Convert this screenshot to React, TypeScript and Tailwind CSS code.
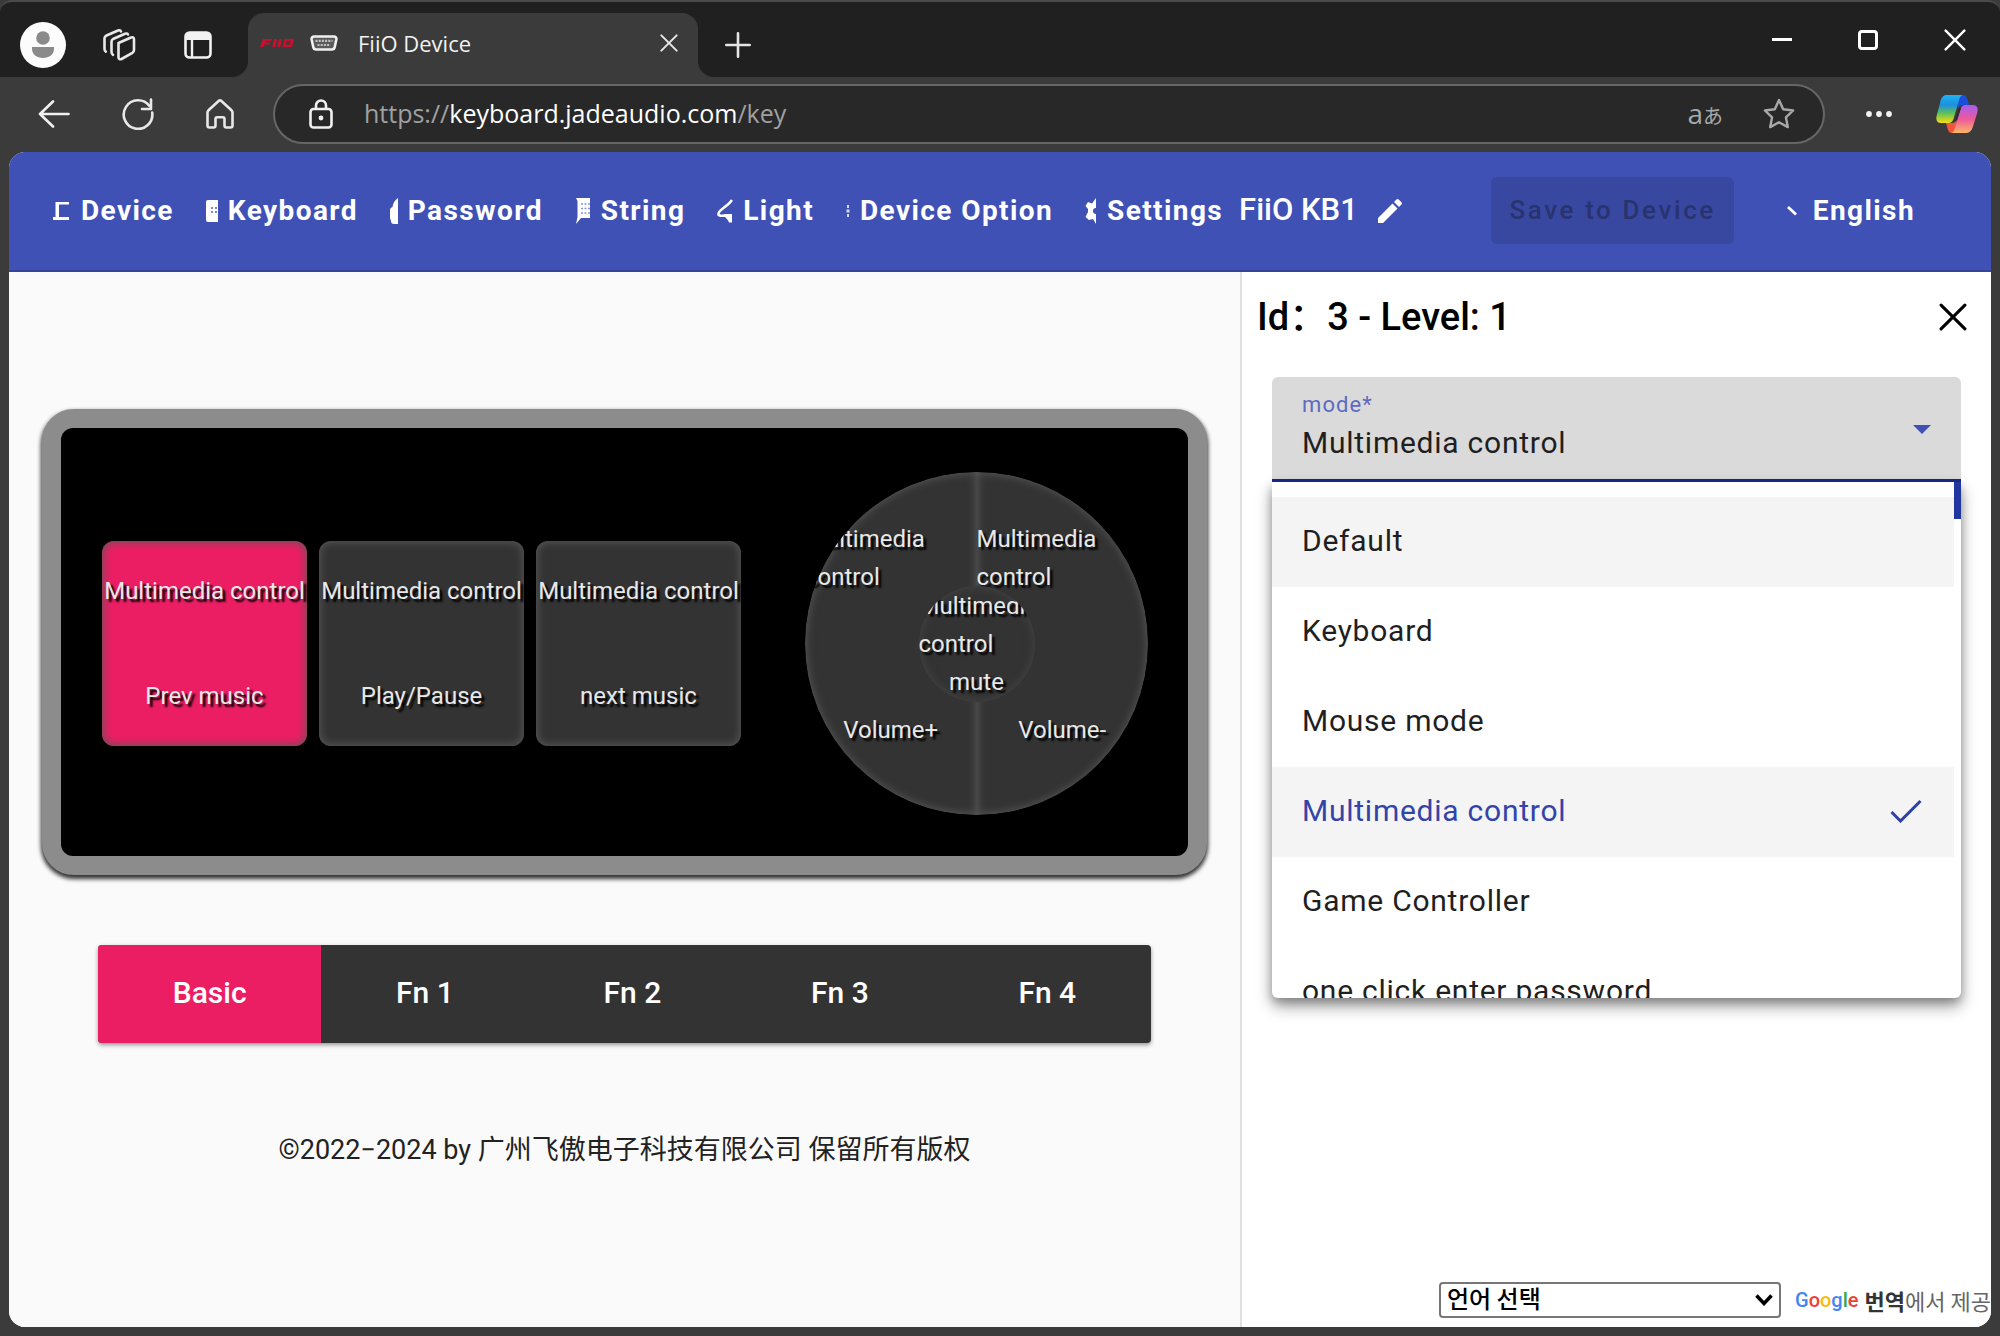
import React, { useState } from "react";

type IconProps = { className?: string };

/* ---------- browser icons ---------- */

function AvatarIcon() {
  return (
    <svg viewBox="0 0 46 46" className="size-[46px]" aria-hidden="true">
      <circle cx="23" cy="23" r="23" fill="#fcfcfc" />
      <circle cx="23" cy="16" r="6.800" fill="#8a8a8a" />
      <path d="M12 25h22v1.500c0 6-4.700 9.500-11 9.500s-11-3.500-11-9.500z" fill="#8a8a8a" />
    </svg>
  );
}

function WorkspacesIcon() {
  return (
    <svg viewBox="0 0 34 34" className="size-[34px]" fill="none" stroke="#e8e8e8" strokeWidth="2.600" strokeLinejoin="round" strokeLinecap="round" aria-hidden="true">
      <path d="M16.500 15 29 9.500c1.500-.7 3 0 3 1.800V22c0 1.200-.6 2.200-1.600 2.800L19.500 31c-1.500.7-3 0-3-1.800z" />
      <path d="M26 6.500C25.500 5.500 24 5.200 23 5.700L11 11c-1 .6-1.500 1.500-1.500 2.700V24c0 1.200.5 2.200 1.500 2.800" />
      <path d="M19 3.500C18.500 2.300 17 2 16 2.500L4.500 7.500C3.500 8 2.500 9 2.500 10.200V21c0 1.200.4 2 1.300 2.600" />
    </svg>
  );
}

function TabActionsIcon() {
  return (
    <svg viewBox="0 0 28 28" className="size-7" fill="none" aria-hidden="true">
      <rect x="1.500" y="1.500" width="25" height="25" rx="4" stroke="#f2f2f2" strokeWidth="2.600" />
      <path d="M2 2h24v7H2z" fill="#f2f2f2" />
      <path d="M8 9v17" stroke="#f2f2f2" strokeWidth="2.400" />
    </svg>
  );
}

function SerialPortIcon() {
  return (
    <svg viewBox="0 0 28 16" className="h-4 w-7" fill="none" aria-hidden="true">
      <path d="M4 1.500h20c1.500 0 2.600 1.200 2.400 2.700l-1.600 7.500c-.3 1.600-1.500 2.800-3.100 2.800H6.300c-1.600 0-2.800-1.200-3.100-2.800L1.600 4.200C1.400 2.700 2.500 1.500 4 1.500z" fill="#5a5a5a" stroke="#f0f0f0" strokeWidth="2.600" />
      <path d="M5.500 5.800h17M7.500 10h13" stroke="#c4c4c4" strokeWidth="2.200" strokeDasharray="2 1.200" />
    </svg>
  );
}

function FiioMark() {
  return (
    <svg viewBox="0 0 34 8" className="h-2 w-[34px]" fill="#c8102e" aria-hidden="true">
      <path d="M3 0h9l-.8 2.200H5.500l-.4 1.200h5l-.7 2H4.300L3.500 8H0z" />
      <path d="M14 0h3l-1.800 8h-3zM19 0h3l-1.800 8h-3z" />
      <path fillRule="evenodd" d="M24.500 0H34l-2 8h-9.500zM26.500 2.300l-.8 3.400h4l.8-3.400z" />
    </svg>
  );
}

function CrossIcon({ className = "" }: IconProps) {
  return (
    <svg viewBox="0 0 20 20" className={className} fill="none" stroke="currentColor" strokeWidth="2.200" strokeLinecap="round" aria-hidden="true">
      <path d="m1.500 1.500 17 17M18.500 1.500l-17 17" />
    </svg>
  );
}

function PlusIcon() {
  return (
    <svg viewBox="0 0 26 26" className="size-[26px]" fill="none" stroke="#e6e6e6" strokeWidth="2.600" strokeLinecap="round" aria-hidden="true">
      <path d="M13 1.300v23.400M1.300 13h23.400" />
    </svg>
  );
}

function BackIcon() {
  return (
    <svg viewBox="0 0 32 28" className="h-7 w-8" fill="none" stroke="#f0f0f0" strokeWidth="2.600" strokeLinecap="round" strokeLinejoin="round" aria-hidden="true">
      <path d="M15 1.500 2 14l13 12.500M2 14h28.500" />
    </svg>
  );
}

function ReloadIcon() {
  return (
    <svg viewBox="0 0 32 32" className="size-8" fill="none" stroke="#e8e8e8" strokeWidth="2.600" strokeLinecap="round" strokeLinejoin="round" aria-hidden="true">
      <path d="M30.200 14.500A14.300 14.300 0 1 1 27.500 8M29 1.500v9.500h-9" />
    </svg>
  );
}

function HomeIcon() {
  return (
    <svg viewBox="0 0 28 30" className="h-[30px] w-7" fill="none" stroke="#e8e8e8" strokeWidth="2.600" strokeLinejoin="round" aria-hidden="true">
      <path d="M1.500 13.500c0-.9.400-1.600 1-2.200L12.600 2a2.100 2.100 0 0 1 2.800 0l10.100 9.300c.6.6 1 1.300 1 2.200V26.500c0 1.100-.9 2-2 2h-4c-1.100 0-2-.9-2-2V20c0-1-.8-1.800-1.800-1.800h-5.400c-1 0-1.800.8-1.800 1.800v6.500c0 1.100-.9 2-2 2h-4c-1.100 0-2-.9-2-2z" />
    </svg>
  );
}

function LockIcon() {
  return (
    <svg viewBox="0 0 24 30" className="h-[30px] w-6" fill="none" stroke="#f0f0f0" strokeWidth="2.600" aria-hidden="true">
      <rect x="1.500" y="10" width="21" height="18.500" rx="3" />
      <path d="M7 10V6.500a5 5 0 0 1 10 0V10" />
      <circle cx="12" cy="19" r="2.400" fill="#f0f0f0" stroke="none" />
    </svg>
  );
}

function StarIcon() {
  return (
    <svg viewBox="0 0 32 32" className="size-8" fill="none" stroke="#a8a8a8" strokeWidth="2.400" strokeLinejoin="round" aria-hidden="true">
      <path d="m16 2 4.200 9.300 9.900 1.200-7.200 6.800 1.900 9.800L16 24.300l-8.800 4.800 1.900-9.800-7.200-6.800 9.900-1.200z" />
    </svg>
  );
}

function DotsIcon() {
  return (
    <svg viewBox="0 0 26 6" className="h-[6px] w-[26px]" fill="#f2f2f2" aria-hidden="true">
      <circle cx="3" cy="3" r="2.900" />
      <circle cx="13" cy="3" r="2.900" />
      <circle cx="23" cy="3" r="2.900" />
    </svg>
  );
}

function CopilotIcon() {
  return (
    <svg viewBox="0 0 42 40" className="h-10 w-[42px]" aria-hidden="true">
      <defs>
        <linearGradient id="cp-a" x1="0" y1="0" x2="0" y2="1">
          <stop offset="0" stopColor="#1eb4f5" />
          <stop offset=".35" stopColor="#1c8fe0" />
          <stop offset=".65" stopColor="#5fbf5a" />
          <stop offset="1" stopColor="#f7e010" />
        </linearGradient>
        <linearGradient id="cp-b" x1="0" y1="0" x2="0" y2="1">
          <stop offset="0" stopColor="#a45cf0" />
          <stop offset=".5" stopColor="#ee5a9a" />
          <stop offset="1" stopColor="#fcb46a" />
        </linearGradient>
      </defs>
      <path d="M22 1h5c2.500 0 3.600 1.500 4.300 4l1.700 6h-6c-3 0-4.500 1.500-5.300 4z" fill="#1b4fd8" />
      <path d="M20 39h-4c-2.500 0-3.600-1.500-4.300-4L10 29h6c3 0 4-1.500 5-4z" fill="#f0563c" />
      <path d="M11.500 1H27c-2 .3-3 2-3.700 4.300l-5.600 19C16.600 28 15 29 12 29H5c-4 0-5.500-3-4.300-7.500l4-15C5.700 3 7.500 1 11.500 1z" fill="url(#cp-a)" />
      <path d="M30.500 39H15c2-.3 3-2 3.700-4.300l5.600-19c1-3.700 2.700-4.700 5.700-4.700h7c4 0 5.500 3 4.300 7.500l-4 13c-1 3.500-2.800 7.500-6.800 7.500z" fill="url(#cp-b)" />
      <path d="m23 14-4 13.500 2-1.500 4-12z" fill="#2b2b2b" />
    </svg>
  );
}

function TabFlare({ className = "" }: IconProps) {
  return (
    <svg viewBox="0 0 16 16" className={className} fill="#3b3b3b" aria-hidden="true">
      <path d="M16 0v16H0A16 16 0 0 0 16 0z" />
    </svg>
  );
}

/* ---------- app bar icons, drawn as the narrow slices their slots show ---------- */

function NavIcon({ name }: { name: string }) {
  switch (name) {
    case "Device":
      return (
        <svg viewBox="0 0 18 22" className="h-[22px] w-[18px]" fill="#fff" aria-hidden="true">
          <path d="M2.500 2H16v2.500H6V17h10v3H0v-3h2.500z" />
        </svg>
      );
    case "Keyboard":
      return (
        <svg viewBox="0 0 12 22" className="h-[22px] w-3" aria-hidden="true">
          <path d="M2 0h10v22H2a2 2 0 0 1-2-2V2a2 2 0 0 1 2-2z" fill="#fff" />
          <path d="M5 7h2v2H5zm4 0h2v2H9zM5 11h2v2H5zm4 0h2v2H9z" fill="#7d88cc" />
        </svg>
      );
    case "Password":
      return (
        <svg viewBox="0 0 8 26" className="h-[26px] w-2" fill="#fff" aria-hidden="true">
          <path d="M8 0v26H4a3 3 0 0 1-3-3L0 20v-8a3 3 0 0 1 2.500-3C3 5 5 2 8 0z" />
        </svg>
      );
    case "String":
      return (
        <svg viewBox="0 0 16 26" className="h-[26px] w-4" aria-hidden="true">
          <path d="M1 0h14v20H6l-5 6 1.500-7V3z" fill="#fff" />
          <path d="M6 6h9M6 10.500h9M6 15h9" stroke="#8b95d2" strokeWidth="1.600" strokeDasharray="2 1.500" />
        </svg>
      );
    case "Light":
      return (
        <svg viewBox="0 0 16 24" className="h-6 w-4" aria-hidden="true">
          <path d="M15 1C13 4 10 6.500 6.500 9 3 11.500 1 13.500 1.500 15.500 2 17 4.500 17 8 16.500" fill="none" stroke="#fff" strokeWidth="2.600" />
          <path d="M7 15h8v8.500H12c-1-3-3-4.500-5-6.500z" fill="#fff" />
        </svg>
      );
    case "Device Option":
      return (
        <svg viewBox="0 0 4 14" className="h-3.5 w-1" fill="#d5daf4" aria-hidden="true">
          <path d="M1 1h2v3H1zM.5 5.500h3v3h-3zM1 10h2v3H1z" />
        </svg>
      );
    case "Settings":
      return (
        <svg viewBox="0 0 12 26" className="h-[26px] w-3" fill="#fff" aria-hidden="true">
          <path d="M11 0v26l-3-5-4 1-3.500-3L3 14v-3L.5 8 3 4l4 1.500z" />
          <path d="M11 10v6a3 3 0 0 1 0-6z" fill="#3f51b5" />
        </svg>
      );
    default:
      return null;
  }
}

function PencilIcon() {
  return (
    <svg viewBox="0 0 24 24" className="size-6" fill="#fff" aria-hidden="true">
      <path d="M0 24v-5L14.500 4.500l5 5L5 24zM16 3l2.200-2.200a2 2 0 0 1 2.800 0L23.200 3a2 2 0 0 1 0 2.800L21 8z" />
    </svg>
  );
}

/* ---------- data ---------- */

const NAV = ["Device", "Keyboard", "Password", "String", "Light", "Device Option", "Settings"];
const KEYS = [
  { id: 3, action: "Prev music" },
  { id: 4, action: "Play/Pause" },
  { id: 5, action: "next music" },
];
const LAYERS = ["Basic", "Fn 1", "Fn 2", "Fn 3", "Fn 4"];
const MODES = ["Default", "Keyboard", "Mouse mode", "Multimedia control", "Game Controller", "one click enter password"];

/* ---------- browser frame ---------- */

function TitleBar() {
  return (
    <div className="flex h-[77px] items-stretch rounded-t-xl border-t-2 border-[#4a4a4a] bg-[#202020]">
      <div className="flex w-[248px] shrink-0 items-center gap-9 pt-2.5 pl-5">
        <button aria-label="Profile"><AvatarIcon /></button>
        <button aria-label="Workspaces"><WorkspacesIcon /></button>
        <button aria-label="Tab actions" className="ml-3"><TabActionsIcon /></button>
      </div>
      <div className="relative mt-[11px] flex w-[450px] items-center rounded-t-2xl bg-[#3b3b3b] pr-5 pb-1 pl-3">
        <TabFlare className="absolute right-full bottom-0 size-4" />
        <TabFlare className="absolute bottom-0 left-full size-4 -scale-x-100" />
        <FiioMark />
        <span className="ml-4"><SerialPortIcon /></span>
        <span className="ml-5 flex-1 font-['Open_Sans',sans-serif] text-[22px] text-[#f2f2f2]">FiiO Device</span>
        <button aria-label="Close tab" className="text-[#e6e6e6]"><CrossIcon className="size-[18px]" /></button>
      </div>
      <button aria-label="New tab" className="ml-[27px] pt-2.5"><PlusIcon /></button>
      <div className="ml-auto flex items-center gap-[66px] pr-[34px] text-white">
        <button aria-label="Minimize" className="flex size-5 items-center"><span className="h-[3px] w-5 bg-white" /></button>
        <button aria-label="Maximize" className="size-5 rounded-[4px] border-[3px] border-white" />
        <button aria-label="Close window"><CrossIcon className="size-[22px]" /></button>
      </div>
    </div>
  );
}

function AddressBar() {
  return (
    <div className="flex h-[75px] items-center pr-[22px] pb-px pl-[38px]">
      <div className="flex w-[235px] shrink-0 items-center gap-[52px]">
        <button aria-label="Back"><BackIcon /></button>
        <button aria-label="Reload"><ReloadIcon /></button>
        <button aria-label="Home"><HomeIcon /></button>
      </div>
      <div className="flex h-[60px] flex-1 items-center rounded-full border-2 border-[#666] bg-[#282828] pr-7 pl-[34px]">
        <LockIcon />
        <a href="https://keyboard.jadeaudio.com/key" className="ml-[31px] flex-1 font-['Open_Sans',sans-serif] text-[25px] text-[#a0a0a0]">
          https://<span className="text-white">keyboard.jadeaudio.com</span>/key
        </a>
        <button aria-label="Translate" className="mr-10 flex items-baseline text-[#a8a8a8]">
          <span className="font-['Open_Sans',sans-serif] text-[28px] leading-8">a</span>
          <span className="font-['Noto_Sans_CJK_JP',sans-serif] text-xl leading-8">あ</span>
        </button>
        <button aria-label="Favorite"><StarIcon /></button>
      </div>
      <button aria-label="More" className="mr-11 ml-[41px]"><DotsIcon /></button>
      <button aria-label="Copilot"><CopilotIcon /></button>
    </div>
  );
}

/* ---------- app ---------- */

function AppBar() {
  return (
    <header className="flex h-[120px] shrink-0 items-center border-b-2 border-[#35449a] bg-[#3f51b5] pr-[76px] pb-px pl-11 text-[28px] font-bold text-white">
      <nav className="flex items-center gap-8">
        {NAV.map((name) => (
          <button key={name} className="flex items-center gap-2.5 tracking-wider whitespace-nowrap">
            <NavIcon name={name} />
            {name}
          </button>
        ))}
      </nav>
      <span className="ml-4 text-[31px] font-medium whitespace-nowrap">FiiO KB1</span>
      <button aria-label="Rename device" className="ml-5"><PencilIcon /></button>
      <button disabled className="ml-auto h-[67px] rounded-md bg-[#3848a0] px-[18px] text-[26px] font-medium tracking-widest whitespace-nowrap text-[#28336f]">
        Save to Device
      </button>
      <button className="ml-[53px] flex items-center gap-4 tracking-wider">
        <svg viewBox="0 0 10 10" className="size-2.5" aria-hidden="true">
          <path d="m1 1 8 7.500" stroke="#fff" strokeWidth="2.800" />
        </svg>
        English
      </button>
    </header>
  );
}

const CAP = "shadow-[inset_0_0_9px_1px_#585858]";
const LABEL = "text-[#e8e8e8] [text-shadow:3px_3px_2px_#000]";

function Board({ selected, onSelect }: { selected: number; onSelect: (id: number) => void }) {
  return (
    <div className="flex h-[466px] rounded-[32px] border-[19px] border-[#8c8c8c] bg-[#8c8c8c] shadow-[0_3px_4px_1px_#333]">
      <div className="flex h-full w-full items-center justify-between rounded-xl bg-black pt-[3px] pr-10 pl-[41px]">
        <div className="flex gap-3">
          {KEYS.map((k) => (
            <button
              key={k.id}
              onClick={() => onSelect(k.id)}
              className={`flex size-[205px] flex-col items-center justify-between rounded-xl pt-8 pb-8 text-2xl leading-9 whitespace-nowrap ${CAP} ${LABEL} ${selected === k.id ? "bg-[#ec1e63]" : "bg-[#333]"}`}
            >
              <span>Multimedia control</span>
              <span>{k.action}</span>
            </button>
          ))}
        </div>
        <div className="relative flex size-[343px] overflow-hidden rounded-full text-2xl leading-[38px]">
          <button className={`flex flex-1 flex-col items-center justify-between rounded-l-full bg-[#333] pt-12 pb-[66px] ${CAP} ${LABEL}`}>
            <span className="w-full text-left">Multimedia control</span>
            <span>Volume+</span>
          </button>
          <button className={`flex flex-1 flex-col items-center justify-between rounded-r-full bg-[#333] pt-12 pb-[66px] ${CAP} ${LABEL}`}>
            <span className="w-full text-left">Multimedia control</span>
            <span>Volume-</span>
          </button>
          <button className={`absolute inset-0 m-auto flex size-[116px] flex-col items-center justify-center overflow-hidden rounded-full bg-[#333] shadow-[inset_0_0_8px_1px_#444] ${LABEL}`}>
            <span className="w-full text-left">Multimedia control</span>
            <span>mute</span>
          </button>
        </div>
      </div>
    </div>
  );
}

function LayerTabs({ layer, onLayer }: { layer: string; onLayer: (l: string) => void }) {
  return (
    <div role="tablist" className="mx-14 mt-[70px] flex h-[98px] overflow-hidden rounded-sm bg-[#333] text-[30px] font-medium text-white shadow-[0_2px_4px_#0006]">
      {LAYERS.map((name) => (
        <button
          key={name}
          role="tab"
          aria-selected={layer === name}
          onClick={() => onLayer(name)}
          className={`flex-1 px-4 pb-1 first:flex-[1.090] ${layer === name ? "bg-[#ec1e63]" : ""}`}
        >
          {name}
        </button>
      ))}
    </div>
  );
}

function ModePanel() {
  const [mode, setMode] = useState("Multimedia control");
  return (
    <aside className="flex w-[751px] shrink-0 flex-col border-l-2 border-[#e0e0e0] bg-white">
      <div className="flex items-center justify-between pt-[19px] pr-6 pl-[15px]">
        <h2 className="font-['Roboto','Noto_Sans_CJK_SC',sans-serif] text-[38px] leading-[52px] font-medium text-black">Id：3 - Level: 1</h2>
        <button aria-label="Close panel" className="text-black"><CrossIcon className="size-7" /></button>
      </div>
      <div className="relative mt-[34px] mr-[30px] ml-[30px]">
        <div className="relative h-[105px] rounded-t-md border-b-[3px] border-[#1a2a8a] bg-[#dadada]">
          <label htmlFor="mode" className="absolute top-3.5 left-[30px] text-[22px] leading-7 tracking-wider text-[#5c6bc0]">mode*</label>
          <select
            id="mode"
            value={mode}
            onChange={(e) => setMode(e.target.value)}
            className="h-full w-full appearance-none bg-transparent pt-7 pl-[30px] text-[30px] tracking-wide text-[#1f1f1f]"
          >
            {MODES.map((m) => <option key={m}>{m}</option>)}
          </select>
          <svg viewBox="0 0 18 9" className="absolute top-12 right-[30px] h-[9px] w-[18px]" fill="#3f51b5" aria-hidden="true"><path d="M0 0h18L9 9z" /></svg>
        </div>
        <ul role="listbox" aria-label="mode" className="absolute top-full right-0 left-0 flex h-[516px] flex-col overflow-hidden rounded-b-md bg-white pt-[15px] pr-[7px] text-[30px] tracking-wide text-[#1f1f1f] shadow-[0_8px_16px_#0006,0_4px_8px_#0003]">
          <li role="presentation" className="absolute top-0 right-0 h-[37px] w-[7px] bg-[#2236a0]" />
          {MODES.map((m) => (
            <li
              key={m}
              role="option"
              aria-selected={m === mode}
              onClick={() => setMode(m)}
              className={`flex h-[90px] shrink-0 items-center justify-between pr-8 pb-[3px] pl-[30px] ${m === mode ? "bg-[#f4f4f4] text-[#3344a8]" : m === "Default" ? "bg-[#f4f4f4]" : ""}`}
            >
              {m}
              {m === mode && (
                <svg viewBox="0 0 32 24" className="h-6 w-8" fill="none" stroke="#2e3fa8" strokeWidth="3" aria-hidden="true"><path d="m1.500 13 9 9L30.500 2" /></svg>
              )}
            </li>
          ))}
        </ul>
      </div>
      <div className="mt-auto flex items-center gap-3.5 overflow-hidden pb-[9px] pl-[197px] font-['Noto_Sans_CJK_KR',sans-serif] whitespace-nowrap">
        <div className="relative w-[342px] shrink-0">
          <select aria-label="언어 선택" className="block h-9 w-full appearance-none rounded-sm border-2 border-[#767676] bg-white pb-1 pl-1.5 text-2xl leading-7 font-medium text-black">
            <option>언어 선택</option>
          </select>
          <svg viewBox="0 0 18 12" className="pointer-events-none absolute top-3 right-2 h-3 w-[18px]" fill="none" stroke="#000" strokeWidth="3.500" aria-hidden="true"><path d="m1.500 1.500 7.500 8 7.500-8" /></svg>
        </div>
        <div className="flex items-center gap-1.5 leading-8">
          <span className="font-['Roboto',sans-serif] text-xl leading-8 font-medium">
            <span className="text-[#4285f4]">G</span><span className="text-[#ea4335]">o</span><span className="text-[#fbbc05]">o</span><span className="text-[#4285f4]">g</span><span className="text-[#34a853]">l</span><span className="text-[#ea4335]">e</span>
          </span>
          <span className="text-[22px] leading-8 text-[#666]"><a href="#translate" className="font-bold text-[#333]">번역</a>에서 제공</span>
        </div>
      </div>
    </aside>
  );
}

export default function App() {
  const [selected, setSelected] = useState(3);
  const [layer, setLayer] = useState("Basic");
  return (
    <div className="flex min-h-screen flex-col bg-[#3b3b3b] font-['Roboto',sans-serif]">
      <TitleBar />
      <AddressBar />
      <div className="mx-[9px] mb-[9px] flex flex-1 flex-col overflow-hidden rounded-2xl bg-white">
        <AppBar />
        <div className="flex flex-1">
          <main className="flex min-w-0 flex-1 flex-col bg-[#fafafa] px-[33px] pt-[137px]">
            <Board selected={selected} onSelect={setSelected} />
            <LayerTabs layer={layer} onLayer={setLayer} />
            <footer className="mt-[87px] text-center font-['Roboto','Noto_Sans_CJK_SC',sans-serif] text-[27px] leading-10 text-[#222]">
              ©2022−2024 by 广州飞傲电子科技有限公司 保留所有版权
            </footer>
          </main>
          <ModePanel />
        </div>
      </div>
    </div>
  );
}
